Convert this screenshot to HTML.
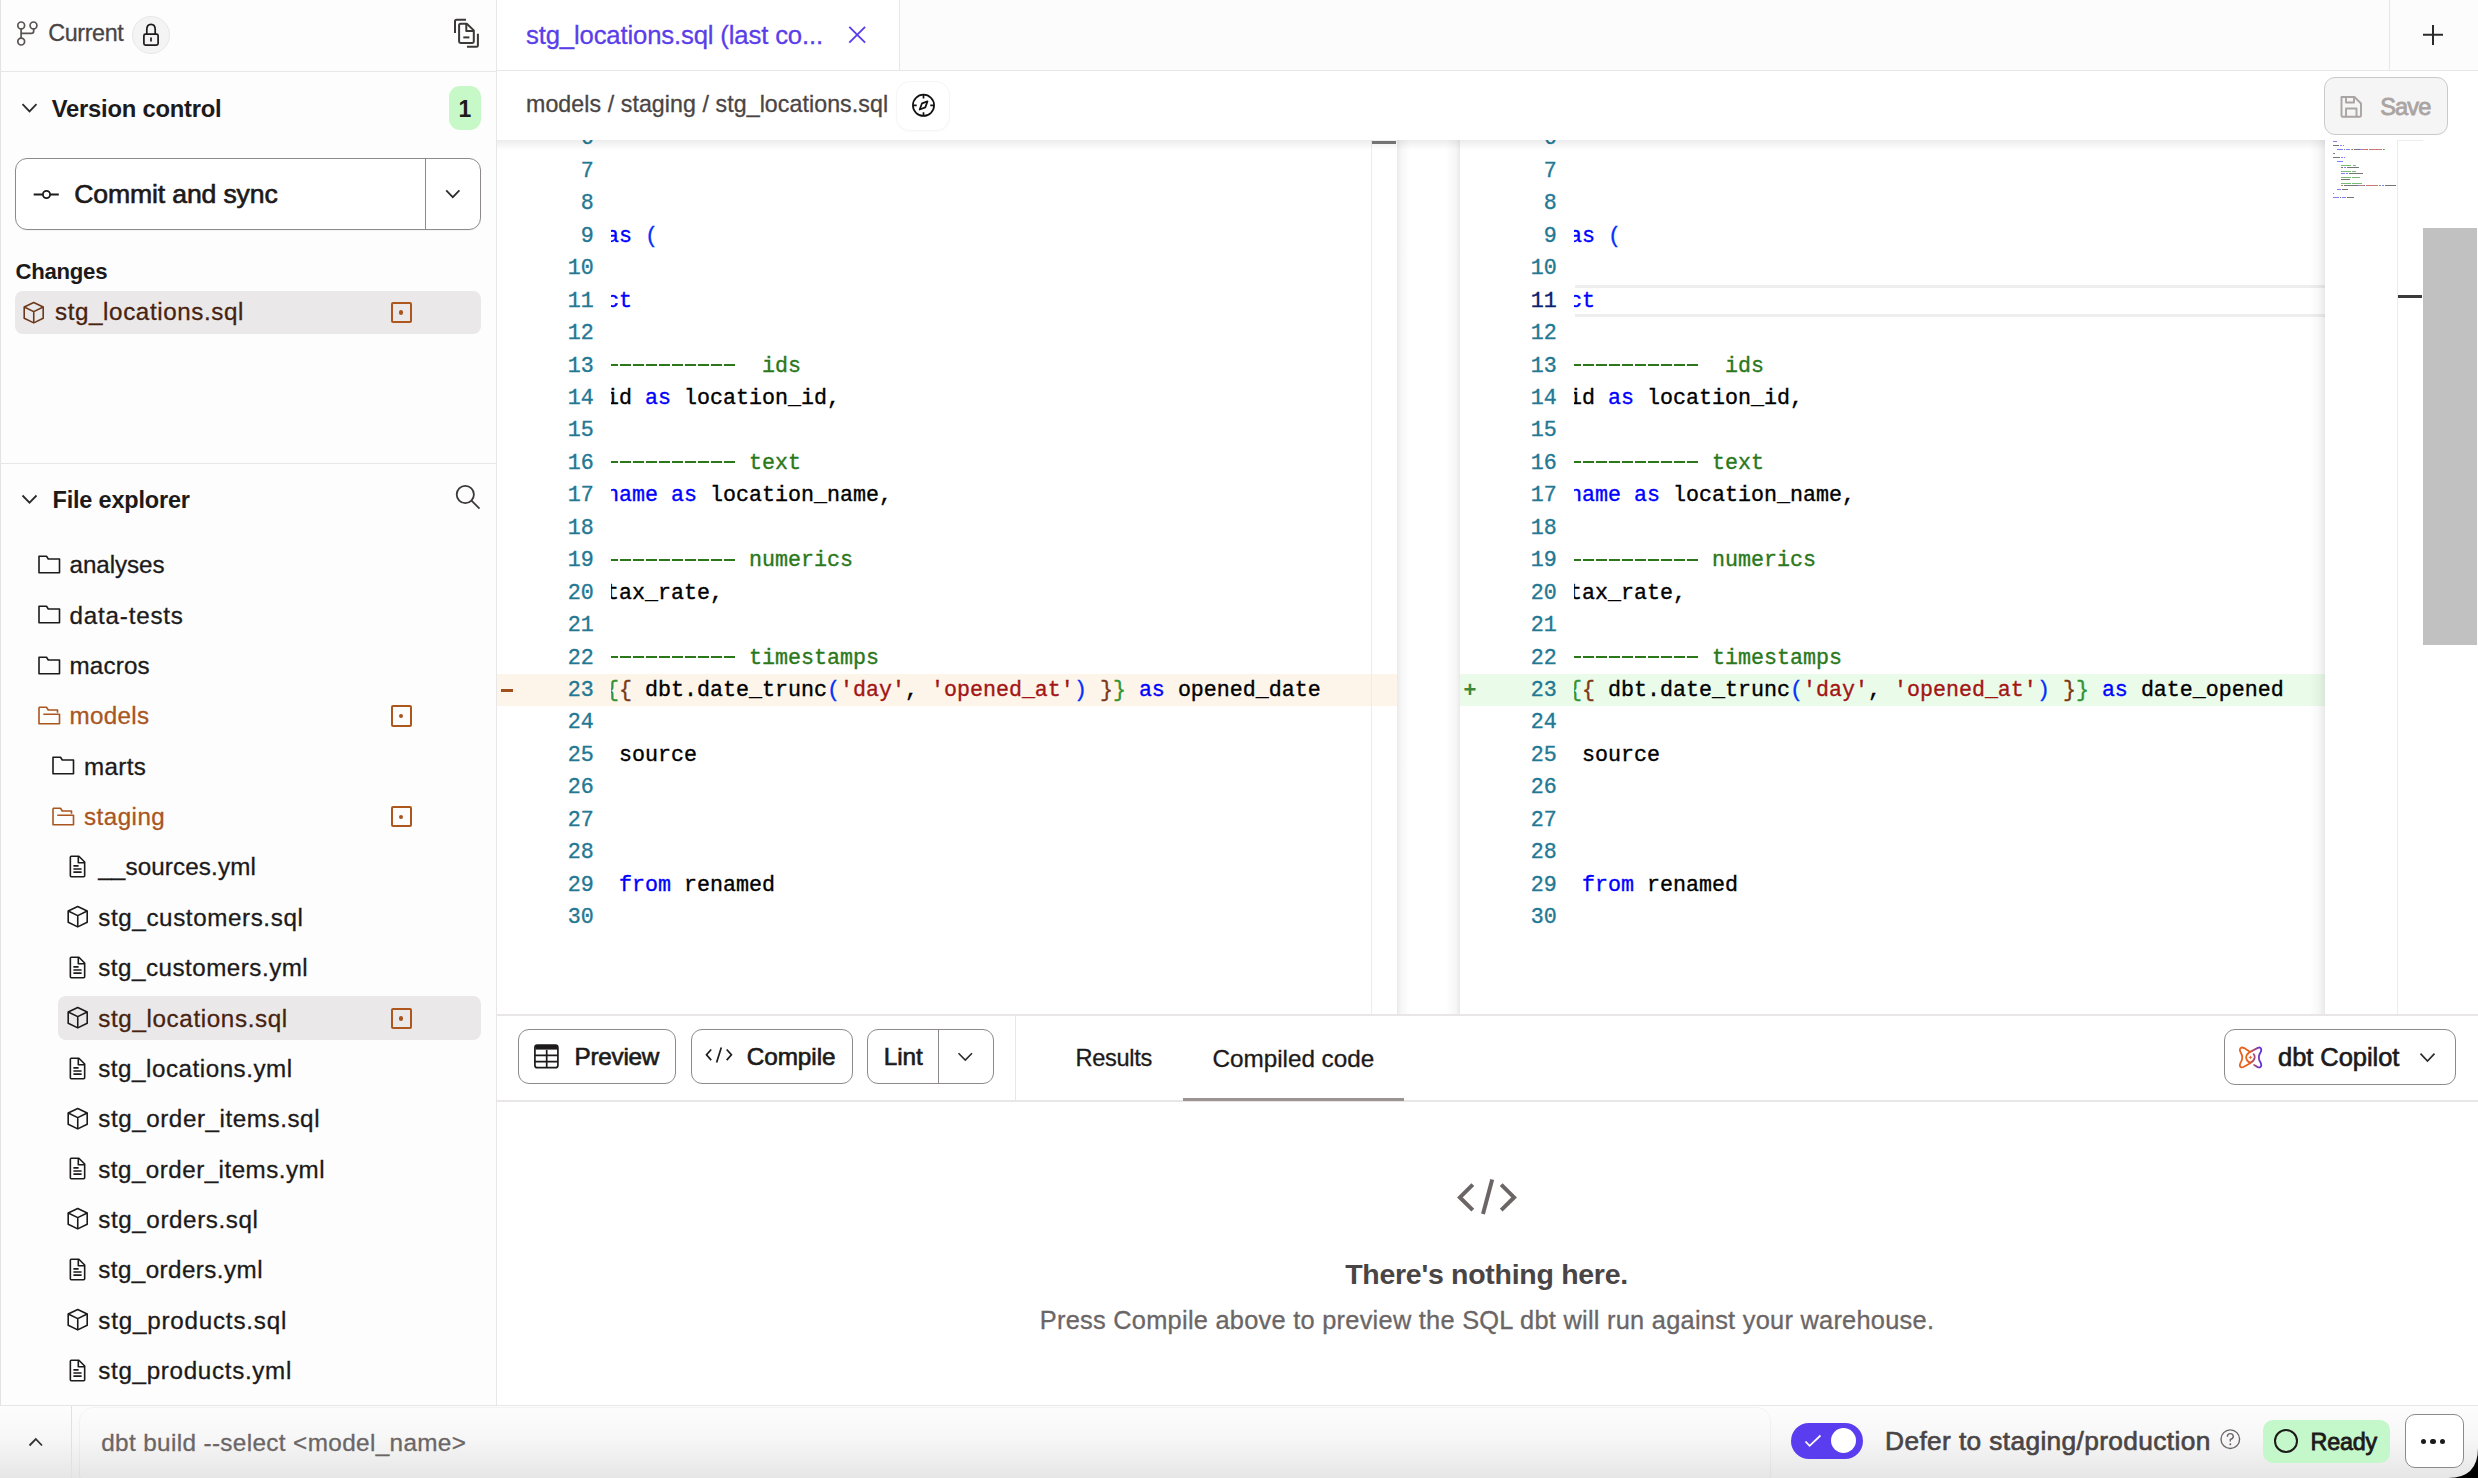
<!DOCTYPE html>
<html><head><meta charset="utf-8"><title>dbt IDE</title>
<style>
html,body{margin:0;padding:0;width:2478px;height:1478px;overflow:hidden;background:#fff;}
body{position:relative;font-family:'Liberation Sans', sans-serif;}
.a{position:absolute;box-sizing:content-box;}
.t{position:absolute;white-space:pre;}
svg.a{overflow:visible;}
</style></head><body>
<div class="a" style="left:0px;top:0px;width:497px;height:1405px;background:#fdfdfd;"></div>
<div class="a" style="left:496px;top:0px;width:1px;height:1405px;background:#e8e6e6;"></div>
<div class="a" style="left:0px;top:0px;width:1px;height:1478px;background:#e3e3e3;"></div>
<div class="a" style="left:0px;top:71px;width:496px;height:1px;background:#e8e6e6;"></div>
<svg class="a" style="left:10px;top:12px;" width="50" height="44" viewBox="0 0 50 44" fill="none"><g stroke="#5a5353" stroke-width="1.7"><circle cx="11.2" cy="13.4" r="3.4"/><circle cx="23.5" cy="13.4" r="3.4"/><circle cx="11.2" cy="29.6" r="3.4"/><path d="M11.1 16.8V26.2M11.1 21.4H21.3Q23.7 21.4 23.7 19V16.8"/></g></svg>
<div class="t" style="left:48.20px;top:18.48px;font-size:23.3px;line-height:30.29px;color:#4a4545;font-weight:400;font-family:'Liberation Sans', sans-serif;-webkit-text-stroke:0.3px #4a4545;letter-spacing:-0.354px;">Current</div>
<div class="a" style="left:132px;top:16px;width:36px;height:36px;border-radius:50%;background:#f4f4f4;border:1px solid #e9e7e7;"></div>
<svg class="a" style="left:128px;top:12px;" width="48" height="46" viewBox="0 0 48 46" fill="none"><g stroke="#1c1a1a" stroke-width="1.7"><rect x="15.9" y="22.1" width="14.2" height="11" rx="1.6"/><path d="M18.8 22V17.6Q18.8 12.3 23 12.3Q27.2 12.3 27.2 17.6V22"/><path d="M23 25.6V29.4"/></g></svg>
<svg class="a" style="left:440px;top:10px;" width="55" height="50" viewBox="0 0 55 50" fill="none"><g stroke="#3d3838" stroke-width="2" stroke-linejoin="round"><path d="M26 9.8H16.6Q15 9.8 15 11.6V23"/><path d="M19.1 15.2Q19.1 13.7 20.6 13.7H26.8L33.8 20.4V31.6Q33.8 33 32.3 33H20.6Q19.1 33 19.1 31.6Z"/><path d="M26.3 13.9V21H33.6"/><path d="M23.3 27.4H29.4"/><path d="M37.9 23.7V35.2Q37.9 36.7 36.4 36.7H27"/></g></svg>
<svg class="a" style="left:14px;top:96px;" width="30" height="26" viewBox="0 0 30 26" fill="none"><path d="M8.5 8.2L15.5 15.4L22.5 8.2" stroke="#2d2a2a" stroke-width="1.8"/></svg>
<div class="t" style="left:51.75px;top:93.53px;font-size:23.8px;line-height:30.94px;color:#1c1a1a;font-weight:700;font-family:'Liberation Sans', sans-serif;letter-spacing:-0.233px;">Version control</div>
<div class="a" style="left:449px;top:86px;width:32px;height:44px;background:#c6f8c8;border-radius:11px;"></div>
<div class="t" style="left:-535.00px;width:2000px;text-align:center;top:94.78px;font-size:23px;line-height:29.9px;color:#1c1a1a;font-weight:700;font-family:'Liberation Sans', sans-serif;">1</div>
<div class="a" style="left:15px;top:158px;width:464px;height:70px;border:1.3px solid #8f8a8a;border-radius:12px;background:#fff;box-shadow:0 1px 1px rgba(0,0,0,0.04);"></div>
<div class="a" style="left:425px;top:159px;width:1px;height:70px;background:#8f8a8a;"></div>
<svg class="a" style="left:30px;top:182px;" width="34" height="26" viewBox="0 0 34 26" fill="none"><g stroke="#1c1a1a" stroke-width="1.8"><circle cx="16.5" cy="12.5" r="3.6"/><path d="M3.7 12.5H12.9M20.1 12.5H28.8"/></g></svg>
<div class="t" style="left:74.25px;top:177.24px;font-size:26.6px;line-height:34.58px;color:#1c1a1a;font-weight:400;font-family:'Liberation Sans', sans-serif;-webkit-text-stroke:0.65px #1c1a1a;letter-spacing:-0.143px;">Commit and sync</div>
<svg class="a" style="left:440px;top:182px;" width="26" height="26" viewBox="0 0 26 26" fill="none"><path d="M6.2 8.4L12.8 15.2L19.4 8.4" stroke="#2d2a2a" stroke-width="1.7"/></svg>
<div class="t" style="left:15.50px;top:258.37px;font-size:22.2px;line-height:28.86px;color:#1c1a1a;font-weight:700;font-family:'Liberation Sans', sans-serif;letter-spacing:-0.281px;">Changes</div>
<div class="a" style="left:15px;top:291px;width:466px;height:43px;background:#ebe8e9;border-radius:8px;"></div>
<svg class="a" style="left:21.75px;top:299.75px;" width="24" height="25" viewBox="0 0 24 25" fill="none"><g stroke="#6b3a1c" stroke-width="1.6" stroke-linejoin="round"><path d="M11.75 2.5L21.2 7V18.3L11.75 22.9L2.2 18.3V7Z"/><path d="M2.2 7L11.75 11.6L21.2 7M11.75 11.6V22.9"/></g></svg>
<div class="t" style="left:55.00px;top:296.38px;font-size:24.2px;line-height:31.46px;color:#47230f;font-weight:400;font-family:'Liberation Sans', sans-serif;-webkit-text-stroke:0.3px #47230f;letter-spacing:0.601px;">stg_locations.sql</div>
<div class="a" style="left:390.5px;top:302px;width:17.3px;height:17.3px;border:2px solid #ad571d;border-radius:2px;"></div>
<div class="a" style="left:398.9px;top:310.4px;width:4.5px;height:4.5px;border-radius:50%;background:#a9541c;"></div>
<div class="a" style="left:0px;top:463px;width:496px;height:1px;background:#e8e6e6;"></div>
<svg class="a" style="left:14px;top:488px;" width="30" height="26" viewBox="0 0 30 26" fill="none"><path d="M8.5 7.5L15.5 14.7L22.5 7.5" stroke="#2d2a2a" stroke-width="1.8"/></svg>
<div class="t" style="left:52.50px;top:485.08px;font-size:23.5px;line-height:30.55px;color:#1c1a1a;font-weight:700;font-family:'Liberation Sans', sans-serif;letter-spacing:-0.194px;">File explorer</div>
<svg class="a" style="left:450px;top:480px;" width="36" height="34" viewBox="0 0 36 34" fill="none"><g stroke="#3d3838" stroke-width="1.8"><circle cx="15.3" cy="14.5" r="8.6"/><path d="M21.5 20.7L29.5 28.6"/></g></svg>
<svg class="a" style="left:37.1px;top:553.8px;" width="25" height="21" viewBox="0 0 25 21" fill="none"><path d="M2 2.2H9.5L11.3 5H22.5V18.7H2Z" stroke="#1c1a1a" stroke-width="1.6" stroke-linejoin="round"/></svg>
<div class="t" style="left:69.50px;top:549.18px;font-size:24.2px;line-height:31.46px;color:#1c1a1a;font-weight:400;font-family:'Liberation Sans', sans-serif;-webkit-text-stroke:0.3px #1c1a1a;letter-spacing:-0.056px;">analyses</div>
<svg class="a" style="left:37.1px;top:604.17px;" width="25" height="21" viewBox="0 0 25 21" fill="none"><path d="M2 2.2H9.5L11.3 5H22.5V18.7H2Z" stroke="#1c1a1a" stroke-width="1.6" stroke-linejoin="round"/></svg>
<div class="t" style="left:69.50px;top:599.55px;font-size:24.2px;line-height:31.46px;color:#1c1a1a;font-weight:400;font-family:'Liberation Sans', sans-serif;-webkit-text-stroke:0.3px #1c1a1a;letter-spacing:0.801px;">data-tests</div>
<svg class="a" style="left:37.1px;top:654.54px;" width="25" height="21" viewBox="0 0 25 21" fill="none"><path d="M2 2.2H9.5L11.3 5H22.5V18.7H2Z" stroke="#1c1a1a" stroke-width="1.6" stroke-linejoin="round"/></svg>
<div class="t" style="left:69.50px;top:649.92px;font-size:24.2px;line-height:31.46px;color:#1c1a1a;font-weight:400;font-family:'Liberation Sans', sans-serif;-webkit-text-stroke:0.3px #1c1a1a;letter-spacing:0.165px;">macros</div>
<svg class="a" style="left:37.1px;top:704.91px;" width="25" height="21" viewBox="0 0 25 21" fill="none"><g stroke="#a9561f" stroke-width="1.6" stroke-linejoin="round"><path d="M2 2.2H9.5L11.3 5H20.5V7.8"/><path d="M2 2.2V18.7H22.5V9.3H6.3"/></g></svg>
<div class="t" style="left:69.50px;top:700.29px;font-size:24.2px;line-height:31.46px;color:#a9561f;font-weight:400;font-family:'Liberation Sans', sans-serif;-webkit-text-stroke:0.3px #a9561f;letter-spacing:0.305px;">models</div>
<div class="a" style="left:390.5px;top:705.41px;width:17.3px;height:17.3px;border:2px solid #ad571d;border-radius:2px;"></div>
<div class="a" style="left:398.9px;top:713.81px;width:4.5px;height:4.5px;border-radius:50%;background:#a9541c;"></div>
<svg class="a" style="left:50.5px;top:755.28px;" width="25" height="21" viewBox="0 0 25 21" fill="none"><path d="M2 2.2H9.5L11.3 5H22.5V18.7H2Z" stroke="#1c1a1a" stroke-width="1.6" stroke-linejoin="round"/></svg>
<div class="t" style="left:84.00px;top:750.66px;font-size:24.2px;line-height:31.46px;color:#1c1a1a;font-weight:400;font-family:'Liberation Sans', sans-serif;-webkit-text-stroke:0.3px #1c1a1a;letter-spacing:0.362px;">marts</div>
<svg class="a" style="left:50.5px;top:805.65px;" width="25" height="21" viewBox="0 0 25 21" fill="none"><g stroke="#a9561f" stroke-width="1.6" stroke-linejoin="round"><path d="M2 2.2H9.5L11.3 5H20.5V7.8"/><path d="M2 2.2V18.7H22.5V9.3H6.3"/></g></svg>
<div class="t" style="left:84.00px;top:801.03px;font-size:24.2px;line-height:31.46px;color:#a9561f;font-weight:400;font-family:'Liberation Sans', sans-serif;-webkit-text-stroke:0.3px #a9561f;letter-spacing:0.463px;">staging</div>
<div class="a" style="left:390.5px;top:806.15px;width:17.3px;height:17.3px;border:2px solid #ad571d;border-radius:2px;"></div>
<div class="a" style="left:398.9px;top:814.55px;width:4.5px;height:4.5px;border-radius:50%;background:#a9541c;"></div>
<svg class="a" style="left:68.35px;top:854.02px;" width="19" height="25" viewBox="0 0 19 25" fill="none"><g stroke="#1c1a1a" stroke-width="1.6" stroke-linejoin="round"><path d="M2.35 3.3Q2.35 2.3 3.35 2.3H10.9L16.66 8V21.7Q16.66 22.7 15.66 22.7H3.35Q2.35 22.7 2.35 21.7Z"/><path d="M10.3 2.5V8.7H16.5"/><path d="M5.4 11.9H10.6M5.4 15H13.6M5.4 18.1H13.6"/></g></svg>
<div class="t" style="left:98.25px;top:851.40px;font-size:24.2px;line-height:31.46px;color:#1c1a1a;font-weight:400;font-family:'Liberation Sans', sans-serif;-webkit-text-stroke:0.3px #1c1a1a;letter-spacing:0.136px;">__sources.yml</div>
<svg class="a" style="left:65.9px;top:904.1899999999999px;" width="24" height="25" viewBox="0 0 24 25" fill="none"><g stroke="#1c1a1a" stroke-width="1.6" stroke-linejoin="round"><path d="M11.75 2.5L21.2 7V18.3L11.75 22.9L2.2 18.3V7Z"/><path d="M2.2 7L11.75 11.6L21.2 7M11.75 11.6V22.9"/></g></svg>
<div class="t" style="left:98.25px;top:901.77px;font-size:24.2px;line-height:31.46px;color:#1c1a1a;font-weight:400;font-family:'Liberation Sans', sans-serif;-webkit-text-stroke:0.3px #1c1a1a;letter-spacing:0.603px;">stg_customers.sql</div>
<svg class="a" style="left:68.35px;top:954.76px;" width="19" height="25" viewBox="0 0 19 25" fill="none"><g stroke="#1c1a1a" stroke-width="1.6" stroke-linejoin="round"><path d="M2.35 3.3Q2.35 2.3 3.35 2.3H10.9L16.66 8V21.7Q16.66 22.7 15.66 22.7H3.35Q2.35 22.7 2.35 21.7Z"/><path d="M10.3 2.5V8.7H16.5"/><path d="M5.4 11.9H10.6M5.4 15H13.6M5.4 18.1H13.6"/></g></svg>
<div class="t" style="left:98.25px;top:952.14px;font-size:24.2px;line-height:31.46px;color:#1c1a1a;font-weight:400;font-family:'Liberation Sans', sans-serif;-webkit-text-stroke:0.3px #1c1a1a;letter-spacing:0.492px;">stg_customers.yml</div>
<div class="a" style="left:58px;top:995.83px;width:423px;height:43.80000000000007px;background:#ebe8e9;border-radius:8px;"></div>
<svg class="a" style="left:65.9px;top:1004.93px;" width="24" height="25" viewBox="0 0 24 25" fill="none"><g stroke="#1c1a1a" stroke-width="1.6" stroke-linejoin="round"><path d="M11.75 2.5L21.2 7V18.3L11.75 22.9L2.2 18.3V7Z"/><path d="M2.2 7L11.75 11.6L21.2 7M11.75 11.6V22.9"/></g></svg>
<div class="t" style="left:98.25px;top:1002.51px;font-size:24.2px;line-height:31.46px;color:#47230f;font-weight:400;font-family:'Liberation Sans', sans-serif;-webkit-text-stroke:0.3px #47230f;letter-spacing:0.632px;">stg_locations.sql</div>
<div class="a" style="left:390.5px;top:1007.6299999999999px;width:17.3px;height:17.3px;border:2px solid #ad571d;border-radius:2px;"></div>
<div class="a" style="left:398.9px;top:1016.0299999999999px;width:4.5px;height:4.5px;border-radius:50%;background:#a9541c;"></div>
<svg class="a" style="left:68.35px;top:1055.5px;" width="19" height="25" viewBox="0 0 19 25" fill="none"><g stroke="#1c1a1a" stroke-width="1.6" stroke-linejoin="round"><path d="M2.35 3.3Q2.35 2.3 3.35 2.3H10.9L16.66 8V21.7Q16.66 22.7 15.66 22.7H3.35Q2.35 22.7 2.35 21.7Z"/><path d="M10.3 2.5V8.7H16.5"/><path d="M5.4 11.9H10.6M5.4 15H13.6M5.4 18.1H13.6"/></g></svg>
<div class="t" style="left:98.25px;top:1052.88px;font-size:24.2px;line-height:31.46px;color:#1c1a1a;font-weight:400;font-family:'Liberation Sans', sans-serif;-webkit-text-stroke:0.3px #1c1a1a;letter-spacing:0.524px;">stg_locations.yml</div>
<svg class="a" style="left:65.9px;top:1105.6699999999998px;" width="24" height="25" viewBox="0 0 24 25" fill="none"><g stroke="#1c1a1a" stroke-width="1.6" stroke-linejoin="round"><path d="M11.75 2.5L21.2 7V18.3L11.75 22.9L2.2 18.3V7Z"/><path d="M2.2 7L11.75 11.6L21.2 7M11.75 11.6V22.9"/></g></svg>
<div class="t" style="left:98.25px;top:1103.25px;font-size:24.2px;line-height:31.46px;color:#1c1a1a;font-weight:400;font-family:'Liberation Sans', sans-serif;-webkit-text-stroke:0.3px #1c1a1a;letter-spacing:0.566px;">stg_order_items.sql</div>
<svg class="a" style="left:68.35px;top:1156.24px;" width="19" height="25" viewBox="0 0 19 25" fill="none"><g stroke="#1c1a1a" stroke-width="1.6" stroke-linejoin="round"><path d="M2.35 3.3Q2.35 2.3 3.35 2.3H10.9L16.66 8V21.7Q16.66 22.7 15.66 22.7H3.35Q2.35 22.7 2.35 21.7Z"/><path d="M10.3 2.5V8.7H16.5"/><path d="M5.4 11.9H10.6M5.4 15H13.6M5.4 18.1H13.6"/></g></svg>
<div class="t" style="left:98.25px;top:1153.62px;font-size:24.2px;line-height:31.46px;color:#1c1a1a;font-weight:400;font-family:'Liberation Sans', sans-serif;-webkit-text-stroke:0.3px #1c1a1a;letter-spacing:0.472px;">stg_order_items.yml</div>
<svg class="a" style="left:65.9px;top:1206.4099999999999px;" width="24" height="25" viewBox="0 0 24 25" fill="none"><g stroke="#1c1a1a" stroke-width="1.6" stroke-linejoin="round"><path d="M11.75 2.5L21.2 7V18.3L11.75 22.9L2.2 18.3V7Z"/><path d="M2.2 7L11.75 11.6L21.2 7M11.75 11.6V22.9"/></g></svg>
<div class="t" style="left:98.25px;top:1203.99px;font-size:24.2px;line-height:31.46px;color:#1c1a1a;font-weight:400;font-family:'Liberation Sans', sans-serif;-webkit-text-stroke:0.3px #1c1a1a;letter-spacing:0.594px;">stg_orders.sql</div>
<svg class="a" style="left:68.35px;top:1256.9799999999998px;" width="19" height="25" viewBox="0 0 19 25" fill="none"><g stroke="#1c1a1a" stroke-width="1.6" stroke-linejoin="round"><path d="M2.35 3.3Q2.35 2.3 3.35 2.3H10.9L16.66 8V21.7Q16.66 22.7 15.66 22.7H3.35Q2.35 22.7 2.35 21.7Z"/><path d="M10.3 2.5V8.7H16.5"/><path d="M5.4 11.9H10.6M5.4 15H13.6M5.4 18.1H13.6"/></g></svg>
<div class="t" style="left:98.25px;top:1254.36px;font-size:24.2px;line-height:31.46px;color:#1c1a1a;font-weight:400;font-family:'Liberation Sans', sans-serif;-webkit-text-stroke:0.3px #1c1a1a;letter-spacing:0.434px;">stg_orders.yml</div>
<svg class="a" style="left:65.9px;top:1307.1499999999999px;" width="24" height="25" viewBox="0 0 24 25" fill="none"><g stroke="#1c1a1a" stroke-width="1.6" stroke-linejoin="round"><path d="M11.75 2.5L21.2 7V18.3L11.75 22.9L2.2 18.3V7Z"/><path d="M2.2 7L11.75 11.6L21.2 7M11.75 11.6V22.9"/></g></svg>
<div class="t" style="left:98.25px;top:1304.73px;font-size:24.2px;line-height:31.46px;color:#1c1a1a;font-weight:400;font-family:'Liberation Sans', sans-serif;-webkit-text-stroke:0.3px #1c1a1a;letter-spacing:0.795px;">stg_products.sql</div>
<svg class="a" style="left:68.35px;top:1357.72px;" width="19" height="25" viewBox="0 0 19 25" fill="none"><g stroke="#1c1a1a" stroke-width="1.6" stroke-linejoin="round"><path d="M2.35 3.3Q2.35 2.3 3.35 2.3H10.9L16.66 8V21.7Q16.66 22.7 15.66 22.7H3.35Q2.35 22.7 2.35 21.7Z"/><path d="M10.3 2.5V8.7H16.5"/><path d="M5.4 11.9H10.6M5.4 15H13.6M5.4 18.1H13.6"/></g></svg>
<div class="t" style="left:98.25px;top:1355.10px;font-size:24.2px;line-height:31.46px;color:#1c1a1a;font-weight:400;font-family:'Liberation Sans', sans-serif;-webkit-text-stroke:0.3px #1c1a1a;letter-spacing:0.683px;">stg_products.yml</div>
<div class="a" style="left:497px;top:0px;width:1981px;height:71px;background:#fcfcfc;"></div>
<div class="a" style="left:497px;top:0px;width:402px;height:71px;background:#fff;"></div>
<div class="a" style="left:899px;top:0px;width:1px;height:71px;background:#e8e6e6;"></div>
<div class="a" style="left:2389px;top:0px;width:1px;height:71px;background:#e8e6e6;"></div>
<div class="t" style="left:526.00px;top:19.48px;font-size:25.7px;line-height:33.41px;color:#5a3ee9;font-weight:400;font-family:'Liberation Sans', sans-serif;-webkit-text-stroke:0.3px #5a3ee9;letter-spacing:-0.149px;">stg_locations.sql (last co...</div>
<svg class="a" style="left:845px;top:23px;" width="24" height="24" viewBox="0 0 24 24" fill="none"><path d="M4.3 3.9L20.1 19.7M20.1 3.9L4.3 19.7" stroke="#5a3ee9" stroke-width="1.9"/></svg>
<svg class="a" style="left:2418px;top:20px;" width="30" height="30" viewBox="0 0 30 30" fill="none"><path d="M15 5V25M5 14.8H25" stroke="#2d2a2a" stroke-width="2"/></svg>
<div class="a" style="left:497px;top:71px;width:1981px;height:69px;background:#fff;"></div>
<div class="a" style="left:497px;top:70px;width:1981px;height:1px;background:#e8e6e6;"></div>
<div class="a" style="left:899px;top:0px;width:1px;height:71px;background:#e8e6e6;"></div>
<div class="t" style="left:526.00px;top:88.78px;font-size:23.2px;line-height:30.16px;color:#4a4545;font-weight:400;font-family:'Liberation Sans', sans-serif;-webkit-text-stroke:0.3px #4a4545;letter-spacing:0.071px;">models / staging / stg_locations.sql</div>
<div class="a" style="left:896px;top:81px;width:52px;height:48px;border-radius:14px;border:1px solid #f6f6f6;box-shadow:0 1px 2px rgba(0,0,0,0.025);background:#fff;"></div>
<svg class="a" style="left:908px;top:90px;" width="32" height="32" viewBox="0 0 32 32" fill="none"><g stroke="#111" stroke-width="1.7"><circle cx="15.5" cy="15.3" r="10.6"/><path d="M15.5 4.7V8.6M15.5 22.3V26.2M4.9 15.3H8.7M22.3 15.3H26.1"/><path d="M11.7 19.5L14 13.4L19.5 11.4L17.3 17.4Z" stroke-linejoin="round"/></g></svg>
<div class="a" style="left:2324px;top:77px;width:122px;height:56px;border-radius:11px;border:1.2px solid #cdc9c9;background:#f5f5f5;"></div>
<svg class="a" style="left:2336px;top:92px;" width="30" height="30" viewBox="0 0 30 30" fill="none"><g stroke="#aaa4a2" stroke-width="1.9" stroke-linejoin="round"><path d="M5.5 5H18.5L25 11.5V23.5Q25 24.8 23.7 24.8H6.8Q5.5 24.8 5.5 23.5Z"/><path d="M10 5.2V10.5H18V5.2M10 24.6V16.5H20.5V24.6"/></g></svg>
<div class="t" style="left:2380.20px;top:92.08px;font-size:23.6px;line-height:30.68px;color:#aaa4a2;font-weight:400;font-family:'Liberation Sans', sans-serif;-webkit-text-stroke:0.8px #aaa4a2;letter-spacing:-0.869px;">Save</div>
<div class="a" style="left:497px;top:140px;width:1981px;height:875px;background:#fff;"></div>
<div class="a" style="left:497px;top:674px;width:900px;height:32px;background:#fdf4ea;"></div>
<div class="a" style="left:501px;top:689px;width:12px;height:3px;background:#a0501a;"></div>
<div class="a" style="left:493.79999999999995px;top:140px;width:100px;height:875px;overflow:hidden;font-family:'Liberation Mono', monospace;font-size:21.67px;"><div class="t" style="left:-100.0px;width:200px;text-align:right;top:-17.65px;height:32.45px;line-height:32.45px;color:#237893;padding-top:1px;-webkit-text-stroke:0.35px #237893;">6</div><div class="t" style="left:-100.0px;width:200px;text-align:right;top:14.80px;height:32.45px;line-height:32.45px;color:#237893;padding-top:1px;-webkit-text-stroke:0.35px #237893;">7</div><div class="t" style="left:-100.0px;width:200px;text-align:right;top:47.25px;height:32.45px;line-height:32.45px;color:#237893;padding-top:1px;-webkit-text-stroke:0.35px #237893;">8</div><div class="t" style="left:-100.0px;width:200px;text-align:right;top:79.70px;height:32.45px;line-height:32.45px;color:#237893;padding-top:1px;-webkit-text-stroke:0.35px #237893;">9</div><div class="t" style="left:-100.0px;width:200px;text-align:right;top:112.15px;height:32.45px;line-height:32.45px;color:#237893;padding-top:1px;-webkit-text-stroke:0.35px #237893;">10</div><div class="t" style="left:-100.0px;width:200px;text-align:right;top:144.60px;height:32.45px;line-height:32.45px;color:#237893;padding-top:1px;-webkit-text-stroke:0.35px #237893;">11</div><div class="t" style="left:-100.0px;width:200px;text-align:right;top:177.05px;height:32.45px;line-height:32.45px;color:#237893;padding-top:1px;-webkit-text-stroke:0.35px #237893;">12</div><div class="t" style="left:-100.0px;width:200px;text-align:right;top:209.50px;height:32.45px;line-height:32.45px;color:#237893;padding-top:1px;-webkit-text-stroke:0.35px #237893;">13</div><div class="t" style="left:-100.0px;width:200px;text-align:right;top:241.95px;height:32.45px;line-height:32.45px;color:#237893;padding-top:1px;-webkit-text-stroke:0.35px #237893;">14</div><div class="t" style="left:-100.0px;width:200px;text-align:right;top:274.40px;height:32.45px;line-height:32.45px;color:#237893;padding-top:1px;-webkit-text-stroke:0.35px #237893;">15</div><div class="t" style="left:-100.0px;width:200px;text-align:right;top:306.85px;height:32.45px;line-height:32.45px;color:#237893;padding-top:1px;-webkit-text-stroke:0.35px #237893;">16</div><div class="t" style="left:-100.0px;width:200px;text-align:right;top:339.30px;height:32.45px;line-height:32.45px;color:#237893;padding-top:1px;-webkit-text-stroke:0.35px #237893;">17</div><div class="t" style="left:-100.0px;width:200px;text-align:right;top:371.75px;height:32.45px;line-height:32.45px;color:#237893;padding-top:1px;-webkit-text-stroke:0.35px #237893;">18</div><div class="t" style="left:-100.0px;width:200px;text-align:right;top:404.20px;height:32.45px;line-height:32.45px;color:#237893;padding-top:1px;-webkit-text-stroke:0.35px #237893;">19</div><div class="t" style="left:-100.0px;width:200px;text-align:right;top:436.65px;height:32.45px;line-height:32.45px;color:#237893;padding-top:1px;-webkit-text-stroke:0.35px #237893;">20</div><div class="t" style="left:-100.0px;width:200px;text-align:right;top:469.10px;height:32.45px;line-height:32.45px;color:#237893;padding-top:1px;-webkit-text-stroke:0.35px #237893;">21</div><div class="t" style="left:-100.0px;width:200px;text-align:right;top:501.55px;height:32.45px;line-height:32.45px;color:#237893;padding-top:1px;-webkit-text-stroke:0.35px #237893;">22</div><div class="t" style="left:-100.0px;width:200px;text-align:right;top:534.00px;height:32.45px;line-height:32.45px;color:#237893;padding-top:1px;-webkit-text-stroke:0.35px #237893;">23</div><div class="t" style="left:-100.0px;width:200px;text-align:right;top:566.45px;height:32.45px;line-height:32.45px;color:#237893;padding-top:1px;-webkit-text-stroke:0.35px #237893;">24</div><div class="t" style="left:-100.0px;width:200px;text-align:right;top:598.90px;height:32.45px;line-height:32.45px;color:#237893;padding-top:1px;-webkit-text-stroke:0.35px #237893;">25</div><div class="t" style="left:-100.0px;width:200px;text-align:right;top:631.35px;height:32.45px;line-height:32.45px;color:#237893;padding-top:1px;-webkit-text-stroke:0.35px #237893;">26</div><div class="t" style="left:-100.0px;width:200px;text-align:right;top:663.80px;height:32.45px;line-height:32.45px;color:#237893;padding-top:1px;-webkit-text-stroke:0.35px #237893;">27</div><div class="t" style="left:-100.0px;width:200px;text-align:right;top:696.25px;height:32.45px;line-height:32.45px;color:#237893;padding-top:1px;-webkit-text-stroke:0.35px #237893;">28</div><div class="t" style="left:-100.0px;width:200px;text-align:right;top:728.70px;height:32.45px;line-height:32.45px;color:#237893;padding-top:1px;-webkit-text-stroke:0.35px #237893;">29</div><div class="t" style="left:-100.0px;width:200px;text-align:right;top:761.15px;height:32.45px;line-height:32.45px;color:#237893;padding-top:1px;-webkit-text-stroke:0.35px #237893;">30</div></div>
<div class="a" style="left:611px;top:140px;width:760px;height:875px;overflow:hidden;font-family:'Liberation Mono', monospace;font-size:21.67px;letter-spacing:0px;-webkit-text-stroke:0.35px currentColor;"><div class="t" style="left:-109px;top:14.80px;line-height:32.45px;height:32.45px;padding-top:1px;"><span style="color:#0431fa">)</span><span style="color:#000000">,</span></div><div class="t" style="left:-109px;top:79.70px;line-height:32.45px;height:32.45px;padding-top:1px;"><span style="color:#000000">renamed </span><span style="color:#0000ff">as</span><span style="color:#000000"> </span><span style="color:#0431fa">(</span></div><div class="t" style="left:-109px;top:144.60px;line-height:32.45px;height:32.45px;padding-top:1px;"><span style="color:#000000">    </span><span style="color:#0000ff">select</span></div><div class="t" style="left:-109px;top:209.50px;line-height:32.45px;height:32.45px;padding-top:1px;"><span style="color:#2a781a">        </span><span style="display:inline-block;width:130.040px;height:2px;vertical-align:5.6px;background:repeating-linear-gradient(90deg,transparent 0 1px,#2a781a 1px 12.2px,transparent 12.2px 13.004px);"></span><span style="color:#2a781a">  ids</span></div><div class="t" style="left:-109px;top:241.95px;line-height:32.45px;height:32.45px;padding-top:1px;"><span style="color:#000000">        id </span><span style="color:#0000ff">as</span><span style="color:#000000"> location_id,</span></div><div class="t" style="left:-109px;top:306.85px;line-height:32.45px;height:32.45px;padding-top:1px;"><span style="color:#2a781a">        </span><span style="display:inline-block;width:130.040px;height:2px;vertical-align:5.6px;background:repeating-linear-gradient(90deg,transparent 0 1px,#2a781a 1px 12.2px,transparent 12.2px 13.004px);"></span><span style="color:#2a781a"> text</span></div><div class="t" style="left:-109px;top:339.30px;line-height:32.45px;height:32.45px;padding-top:1px;"><span style="color:#000000">        </span><span style="color:#0000ff">name</span><span style="color:#000000"> </span><span style="color:#0000ff">as</span><span style="color:#000000"> location_name,</span></div><div class="t" style="left:-109px;top:404.20px;line-height:32.45px;height:32.45px;padding-top:1px;"><span style="color:#2a781a">        </span><span style="display:inline-block;width:130.040px;height:2px;vertical-align:5.6px;background:repeating-linear-gradient(90deg,transparent 0 1px,#2a781a 1px 12.2px,transparent 12.2px 13.004px);"></span><span style="color:#2a781a"> numerics</span></div><div class="t" style="left:-109px;top:436.65px;line-height:32.45px;height:32.45px;padding-top:1px;"><span style="color:#000000">        tax_rate,</span></div><div class="t" style="left:-109px;top:501.55px;line-height:32.45px;height:32.45px;padding-top:1px;"><span style="color:#2a781a">        </span><span style="display:inline-block;width:130.040px;height:2px;vertical-align:5.6px;background:repeating-linear-gradient(90deg,transparent 0 1px,#2a781a 1px 12.2px,transparent 12.2px 13.004px);"></span><span style="color:#2a781a"> timestamps</span></div><div class="t" style="left:-109px;top:534.00px;line-height:32.45px;height:32.45px;padding-top:1px;"><span style="color:#000000">        </span><span style="color:#319331">{</span><span style="color:#7b3814">{</span><span style="color:#000000"> dbt.date_trunc</span><span style="color:#0431fa">(</span><span style="color:#a31515">&#x27;day&#x27;</span><span style="color:#000000">, </span><span style="color:#a31515">&#x27;opened_at&#x27;</span><span style="color:#0431fa">)</span><span style="color:#000000"> </span><span style="color:#7b3814">}</span><span style="color:#319331">}</span><span style="color:#000000"> </span><span style="color:#0000ff">as</span><span style="color:#000000"> </span><span style="color:#000000">opened_date</span></div><div class="t" style="left:-109px;top:598.90px;line-height:32.45px;height:32.45px;padding-top:1px;"><span style="color:#000000">    </span><span style="color:#0000ff">from</span><span style="color:#000000"> source</span></div><div class="t" style="left:-109px;top:663.80px;line-height:32.45px;height:32.45px;padding-top:1px;"><span style="color:#0431fa">)</span></div><div class="t" style="left:-109px;top:728.70px;line-height:32.45px;height:32.45px;padding-top:1px;"><span style="color:#0000ff">select</span><span style="color:#000000"> * </span><span style="color:#0000ff">from</span><span style="color:#000000"> renamed</span></div></div>
<div class="a" style="left:1460px;top:674px;width:865px;height:32px;background:#ebfbea;"></div>
<div class="t" style="left:470.00px;width:2000px;text-align:center;top:676.07px;font-size:22px;line-height:28.6px;color:#3b8a3b;font-weight:700;font-family:'Liberation Sans', sans-serif;">+</div>
<div class="a" style="left:1575px;top:285px;width:750px;height:3px;background:#eeeeee;"></div>
<div class="a" style="left:1575px;top:314px;width:750px;height:3px;background:#eeeeee;"></div>
<div class="a" style="left:1456.8px;top:140px;width:100px;height:875px;overflow:hidden;font-family:'Liberation Mono', monospace;font-size:21.67px;"><div class="t" style="left:-100.0px;width:200px;text-align:right;top:-17.65px;height:32.45px;line-height:32.45px;color:#237893;padding-top:1px;-webkit-text-stroke:0.35px #237893;">6</div><div class="t" style="left:-100.0px;width:200px;text-align:right;top:14.80px;height:32.45px;line-height:32.45px;color:#237893;padding-top:1px;-webkit-text-stroke:0.35px #237893;">7</div><div class="t" style="left:-100.0px;width:200px;text-align:right;top:47.25px;height:32.45px;line-height:32.45px;color:#237893;padding-top:1px;-webkit-text-stroke:0.35px #237893;">8</div><div class="t" style="left:-100.0px;width:200px;text-align:right;top:79.70px;height:32.45px;line-height:32.45px;color:#237893;padding-top:1px;-webkit-text-stroke:0.35px #237893;">9</div><div class="t" style="left:-100.0px;width:200px;text-align:right;top:112.15px;height:32.45px;line-height:32.45px;color:#237893;padding-top:1px;-webkit-text-stroke:0.35px #237893;">10</div><div class="t" style="left:-100.0px;width:200px;text-align:right;top:144.60px;height:32.45px;line-height:32.45px;color:#0b216f;padding-top:1px;-webkit-text-stroke:0.35px #0b216f;">11</div><div class="t" style="left:-100.0px;width:200px;text-align:right;top:177.05px;height:32.45px;line-height:32.45px;color:#237893;padding-top:1px;-webkit-text-stroke:0.35px #237893;">12</div><div class="t" style="left:-100.0px;width:200px;text-align:right;top:209.50px;height:32.45px;line-height:32.45px;color:#237893;padding-top:1px;-webkit-text-stroke:0.35px #237893;">13</div><div class="t" style="left:-100.0px;width:200px;text-align:right;top:241.95px;height:32.45px;line-height:32.45px;color:#237893;padding-top:1px;-webkit-text-stroke:0.35px #237893;">14</div><div class="t" style="left:-100.0px;width:200px;text-align:right;top:274.40px;height:32.45px;line-height:32.45px;color:#237893;padding-top:1px;-webkit-text-stroke:0.35px #237893;">15</div><div class="t" style="left:-100.0px;width:200px;text-align:right;top:306.85px;height:32.45px;line-height:32.45px;color:#237893;padding-top:1px;-webkit-text-stroke:0.35px #237893;">16</div><div class="t" style="left:-100.0px;width:200px;text-align:right;top:339.30px;height:32.45px;line-height:32.45px;color:#237893;padding-top:1px;-webkit-text-stroke:0.35px #237893;">17</div><div class="t" style="left:-100.0px;width:200px;text-align:right;top:371.75px;height:32.45px;line-height:32.45px;color:#237893;padding-top:1px;-webkit-text-stroke:0.35px #237893;">18</div><div class="t" style="left:-100.0px;width:200px;text-align:right;top:404.20px;height:32.45px;line-height:32.45px;color:#237893;padding-top:1px;-webkit-text-stroke:0.35px #237893;">19</div><div class="t" style="left:-100.0px;width:200px;text-align:right;top:436.65px;height:32.45px;line-height:32.45px;color:#237893;padding-top:1px;-webkit-text-stroke:0.35px #237893;">20</div><div class="t" style="left:-100.0px;width:200px;text-align:right;top:469.10px;height:32.45px;line-height:32.45px;color:#237893;padding-top:1px;-webkit-text-stroke:0.35px #237893;">21</div><div class="t" style="left:-100.0px;width:200px;text-align:right;top:501.55px;height:32.45px;line-height:32.45px;color:#237893;padding-top:1px;-webkit-text-stroke:0.35px #237893;">22</div><div class="t" style="left:-100.0px;width:200px;text-align:right;top:534.00px;height:32.45px;line-height:32.45px;color:#237893;padding-top:1px;-webkit-text-stroke:0.35px #237893;">23</div><div class="t" style="left:-100.0px;width:200px;text-align:right;top:566.45px;height:32.45px;line-height:32.45px;color:#237893;padding-top:1px;-webkit-text-stroke:0.35px #237893;">24</div><div class="t" style="left:-100.0px;width:200px;text-align:right;top:598.90px;height:32.45px;line-height:32.45px;color:#237893;padding-top:1px;-webkit-text-stroke:0.35px #237893;">25</div><div class="t" style="left:-100.0px;width:200px;text-align:right;top:631.35px;height:32.45px;line-height:32.45px;color:#237893;padding-top:1px;-webkit-text-stroke:0.35px #237893;">26</div><div class="t" style="left:-100.0px;width:200px;text-align:right;top:663.80px;height:32.45px;line-height:32.45px;color:#237893;padding-top:1px;-webkit-text-stroke:0.35px #237893;">27</div><div class="t" style="left:-100.0px;width:200px;text-align:right;top:696.25px;height:32.45px;line-height:32.45px;color:#237893;padding-top:1px;-webkit-text-stroke:0.35px #237893;">28</div><div class="t" style="left:-100.0px;width:200px;text-align:right;top:728.70px;height:32.45px;line-height:32.45px;color:#237893;padding-top:1px;-webkit-text-stroke:0.35px #237893;">29</div><div class="t" style="left:-100.0px;width:200px;text-align:right;top:761.15px;height:32.45px;line-height:32.45px;color:#237893;padding-top:1px;-webkit-text-stroke:0.35px #237893;">30</div></div>
<div class="a" style="left:1574px;top:140px;width:751px;height:875px;overflow:hidden;font-family:'Liberation Mono', monospace;font-size:21.67px;letter-spacing:0px;-webkit-text-stroke:0.35px currentColor;"><div class="t" style="left:-109px;top:14.80px;line-height:32.45px;height:32.45px;padding-top:1px;"><span style="color:#0431fa">)</span><span style="color:#000000">,</span></div><div class="t" style="left:-109px;top:79.70px;line-height:32.45px;height:32.45px;padding-top:1px;"><span style="color:#000000">renamed </span><span style="color:#0000ff">as</span><span style="color:#000000"> </span><span style="color:#0431fa">(</span></div><div class="t" style="left:-109px;top:144.60px;line-height:32.45px;height:32.45px;padding-top:1px;"><span style="color:#000000">    </span><span style="color:#0000ff">select</span></div><div class="t" style="left:-109px;top:209.50px;line-height:32.45px;height:32.45px;padding-top:1px;"><span style="color:#2a781a">        </span><span style="display:inline-block;width:130.040px;height:2px;vertical-align:5.6px;background:repeating-linear-gradient(90deg,transparent 0 1px,#2a781a 1px 12.2px,transparent 12.2px 13.004px);"></span><span style="color:#2a781a">  ids</span></div><div class="t" style="left:-109px;top:241.95px;line-height:32.45px;height:32.45px;padding-top:1px;"><span style="color:#000000">        id </span><span style="color:#0000ff">as</span><span style="color:#000000"> location_id,</span></div><div class="t" style="left:-109px;top:306.85px;line-height:32.45px;height:32.45px;padding-top:1px;"><span style="color:#2a781a">        </span><span style="display:inline-block;width:130.040px;height:2px;vertical-align:5.6px;background:repeating-linear-gradient(90deg,transparent 0 1px,#2a781a 1px 12.2px,transparent 12.2px 13.004px);"></span><span style="color:#2a781a"> text</span></div><div class="t" style="left:-109px;top:339.30px;line-height:32.45px;height:32.45px;padding-top:1px;"><span style="color:#000000">        </span><span style="color:#0000ff">name</span><span style="color:#000000"> </span><span style="color:#0000ff">as</span><span style="color:#000000"> location_name,</span></div><div class="t" style="left:-109px;top:404.20px;line-height:32.45px;height:32.45px;padding-top:1px;"><span style="color:#2a781a">        </span><span style="display:inline-block;width:130.040px;height:2px;vertical-align:5.6px;background:repeating-linear-gradient(90deg,transparent 0 1px,#2a781a 1px 12.2px,transparent 12.2px 13.004px);"></span><span style="color:#2a781a"> numerics</span></div><div class="t" style="left:-109px;top:436.65px;line-height:32.45px;height:32.45px;padding-top:1px;"><span style="color:#000000">        tax_rate,</span></div><div class="t" style="left:-109px;top:501.55px;line-height:32.45px;height:32.45px;padding-top:1px;"><span style="color:#2a781a">        </span><span style="display:inline-block;width:130.040px;height:2px;vertical-align:5.6px;background:repeating-linear-gradient(90deg,transparent 0 1px,#2a781a 1px 12.2px,transparent 12.2px 13.004px);"></span><span style="color:#2a781a"> timestamps</span></div><div class="t" style="left:-109px;top:534.00px;line-height:32.45px;height:32.45px;padding-top:1px;"><span style="color:#000000">        </span><span style="color:#319331">{</span><span style="color:#7b3814">{</span><span style="color:#000000"> dbt.date_trunc</span><span style="color:#0431fa">(</span><span style="color:#a31515">&#x27;day&#x27;</span><span style="color:#000000">, </span><span style="color:#a31515">&#x27;opened_at&#x27;</span><span style="color:#0431fa">)</span><span style="color:#000000"> </span><span style="color:#7b3814">}</span><span style="color:#319331">}</span><span style="color:#000000"> </span><span style="color:#0000ff">as</span><span style="color:#000000"> </span><span style="color:#000000">date_opened</span></div><div class="t" style="left:-109px;top:598.90px;line-height:32.45px;height:32.45px;padding-top:1px;"><span style="color:#000000">    </span><span style="color:#0000ff">from</span><span style="color:#000000"> source</span></div><div class="t" style="left:-109px;top:663.80px;line-height:32.45px;height:32.45px;padding-top:1px;"><span style="color:#0431fa">)</span></div><div class="t" style="left:-109px;top:728.70px;line-height:32.45px;height:32.45px;padding-top:1px;"><span style="color:#0000ff">select</span><span style="color:#000000"> * </span><span style="color:#0000ff">from</span><span style="color:#000000"> renamed</span></div></div>
<div class="a" style="left:1371px;top:140px;width:1px;height:875px;background:#ececec;"></div>
<div class="a" style="left:1372px;top:141px;width:24px;height:3px;background:#7a7a7a;"></div>
<div class="a" style="left:1397px;top:140px;width:63px;height:875px;background:linear-gradient(90deg,#e9e9e9 0px,#f6f6f6 4px,#fff 13px,#fff 49px,#f6f6f6 59px,#e9e9e9 63px);"></div>
<div class="a" style="left:2309px;top:140px;width:16px;height:875px;background:linear-gradient(90deg,rgba(0,0,0,0) 0,rgba(0,0,0,0.03) 60%,rgba(0,0,0,0.085) 100%);"></div>
<div class="a" style="left:2325px;top:140px;width:72px;height:875px;background:#fff;"></div>
<div class="a" style="left:2397px;top:140px;width:1px;height:875px;background:#ececec;"></div>
<div class="a" style="left:2398px;top:295px;width:24px;height:3px;background:#3a3a3a;"></div>
<div class="a" style="left:2423px;top:228px;width:54px;height:417px;background:#c1c1c1;"></div>
<div class="a" style="left:497px;top:140px;width:1828px;height:10px;background:linear-gradient(180deg,rgba(0,0,0,0.075),rgba(0,0,0,0));"></div>
<div class="a" style="left:2398px;top:140px;width:25px;height:1px;background:#eeeeee;"></div>
<div class="a" style="left:497px;top:1015px;width:1981px;height:390px;background:#fff;"></div>
<div class="a" style="left:497px;top:1014px;width:1981px;height:2px;background:#e8e6e6;"></div>
<div class="a" style="left:497px;top:1100px;width:1981px;height:2px;background:#e8e6e6;"></div>
<div class="a" style="left:1015px;top:1016px;width:1px;height:85px;background:#e8e6e6;"></div>
<div class="a" style="left:518px;top:1029px;width:156.4px;height:53.4px;border:1.3px solid #8f8a8a;border-radius:11px;background:#fff;"></div>
<svg class="a" style="left:530px;top:1040px;" width="34" height="34" viewBox="0 0 34 34" fill="none"><g stroke="#1c1a1a" stroke-width="1.7"><rect x="4.9" y="5.2" width="23" height="22.5" rx="2.5"/><path d="M5.5 7.6H27.3" stroke-width="4"/><path d="M4.9 15.3H27.8M4.9 21.6H27.8M16.7 10V27.7"/></g></svg>
<div class="t" style="left:574.60px;top:1041.08px;font-size:24.3px;line-height:31.59px;color:#1c1a1a;font-weight:400;font-family:'Liberation Sans', sans-serif;-webkit-text-stroke:0.65px #1c1a1a;letter-spacing:-0.293px;">Preview</div>
<div class="a" style="left:691px;top:1029px;width:160.4px;height:53.4px;border:1.3px solid #8f8a8a;border-radius:11px;background:#fff;"></div>
<svg class="a" style="left:702px;top:1042px;" width="34" height="26" viewBox="0 0 34 26" fill="none"><g stroke="#1c1a1a" stroke-width="1.7"><path d="M9.2 7.5L4.5 12.8L9.2 18.1M24.7 7.5L29.4 12.8L24.7 18.1M19.3 5.5L14.6 20.4"/></g></svg>
<div class="t" style="left:746.70px;top:1041.08px;font-size:24.3px;line-height:31.59px;color:#1c1a1a;font-weight:400;font-family:'Liberation Sans', sans-serif;-webkit-text-stroke:0.65px #1c1a1a;letter-spacing:-0.039px;">Compile</div>
<div class="a" style="left:867px;top:1029px;width:125.4px;height:53.4px;border:1.3px solid #8f8a8a;border-radius:11px;background:#fff;"></div>
<div class="a" style="left:938px;top:1030px;width:1px;height:54px;background:#8f8a8a;"></div>
<div class="t" style="left:883.80px;top:1041.08px;font-size:24.3px;line-height:31.59px;color:#1c1a1a;font-weight:400;font-family:'Liberation Sans', sans-serif;-webkit-text-stroke:0.65px #1c1a1a;letter-spacing:-0.058px;">Lint</div>
<svg class="a" style="left:952px;top:1046px;" width="26" height="22" viewBox="0 0 26 22" fill="none"><path d="M6.5 7.2L13.3 14L20 7.2" stroke="#2d2a2a" stroke-width="1.6"/></svg>
<div class="t" style="left:1075.50px;top:1043.28px;font-size:23.6px;line-height:30.68px;color:#1c1a1a;font-weight:400;font-family:'Liberation Sans', sans-serif;-webkit-text-stroke:0.3px #1c1a1a;letter-spacing:-0.315px;">Results</div>
<div class="t" style="left:1212.50px;top:1042.58px;font-size:24.3px;line-height:31.59px;color:#1c1a1a;font-weight:400;font-family:'Liberation Sans', sans-serif;-webkit-text-stroke:0.3px #1c1a1a;letter-spacing:-0.032px;">Compiled code</div>
<div class="a" style="left:1183px;top:1098px;width:221px;height:3px;background:#9b9492;"></div>
<div class="a" style="left:2224px;top:1029px;width:230.4px;height:54.4px;border:1.3px solid #8f8a8a;border-radius:11px;background:#fff;"></div>
<svg class="a" style="left:2234px;top:1042px;" width="34" height="30" viewBox="0 0 34 30" fill="none"><defs><linearGradient id="cg" gradientUnits="userSpaceOnUse" x1="15" y1="0" x2="27" y2="0"><stop offset="0" stop-color="#e8601c"/><stop offset="1" stop-color="#5a2ee6"/></linearGradient></defs><g stroke-width="1.8" fill="none" stroke-linejoin="round" stroke-linecap="round"><path stroke="#e8601c" d="M16.2 9.9L10.2 6.1Q6.6 4.4 5.8 7.6Q5.8 9.2 7.1 11.2Q9.5 15.4 7.1 19.6Q5.8 21.7 5.8 23.3Q6.3 26.3 9.4 25L16.2 21.2"/><path stroke="url(#cg)" d="M16.2 9.9L23.8 5.9Q26.9 4.6 27.3 7.7Q27.3 9.3 26 11.2Q23.6 15.4 26 19.6Q27.3 21.6 27.3 23.4Q26.9 26.3 23.8 25.1L20.1 23"/><path stroke="url(#cg)" d="M14.9 10.7Q11.9 12.8 12.2 16.2Q12.8 19.6 16.2 20.9Q19.9 19.3 20.7 15.8Q21 13.5 19.6 12.1"/></g><path fill="#e8601c" d="M16.4 13.5L17.1 14.8L18.4 15.4L17.1 16.1L16.4 17.4L15.8 16.1L14.5 15.4L15.8 14.8Z"/></svg>
<div class="t" style="left:2278.00px;top:1041.38px;font-size:25.5px;line-height:33.15px;color:#1c1a1a;font-weight:400;font-family:'Liberation Sans', sans-serif;-webkit-text-stroke:0.65px #1c1a1a;letter-spacing:-0.054px;">dbt Copilot</div>
<svg class="a" style="left:2414px;top:1046px;" width="26" height="24" viewBox="0 0 26 24" fill="none"><path d="M6.5 7.7L13.5 15L20.5 7.7" stroke="#2d2a2a" stroke-width="1.7"/></svg>
<svg class="a" style="left:1440px;top:1170px;" width="90" height="60" viewBox="0 0 90 60" fill="none"><g stroke="#6b6565" stroke-width="4" stroke-linecap="butt" stroke-linejoin="miter"><path d="M32.8 14.6L19.9 27.4L32.8 40.2M61.2 14.6L74.1 27.4L61.2 40.2M52.2 9.6L43 44"/></g></svg>
<div class="t" style="left:486.56px;width:2000px;text-align:center;top:1256.29px;font-size:28.5px;line-height:37.05px;color:#4a4545;font-weight:700;font-family:'Liberation Sans', sans-serif;letter-spacing:-0.285px;">There&#x27;s nothing here.</div>
<div class="t" style="left:487.03px;width:2000px;text-align:center;top:1304.18px;font-size:25.4px;line-height:33.02px;color:#6b6666;font-weight:400;font-family:'Liberation Sans', sans-serif;-webkit-text-stroke:0.3px #6b6666;letter-spacing:0.253px;">Press Compile above to preview the SQL dbt will run against your warehouse.</div>
<div class="a" style="left:0px;top:1405px;width:2478px;height:73px;background:linear-gradient(180deg,#fdfdfd 0%,#f7f7f7 45%,#e6e6e6 100%);"></div>
<div class="a" style="left:0px;top:1405px;width:2478px;height:1px;background:#e8e6e6;"></div>
<div class="a" style="left:71px;top:1406px;width:1px;height:72px;background:#e2e0e0;"></div>
<div class="a" style="left:79px;top:1407px;width:1690px;height:80px;border:1px solid rgba(0,0,0,0.035);border-radius:14px;"></div>
<svg class="a" style="left:24px;top:1430px;" width="24" height="22" viewBox="0 0 24 22" fill="none"><path d="M5.5 15.5L11.8 9L18 15.5" stroke="#333" stroke-width="1.8"/></svg>
<div class="t" style="left:101.20px;top:1427.28px;font-size:24.3px;line-height:31.59px;color:#6b6666;font-weight:400;font-family:'Liberation Sans', sans-serif;-webkit-text-stroke:0.3px #6b6666;letter-spacing:0.363px;">dbt build --select &lt;model_name&gt;</div>
<div class="a" style="left:1791px;top:1423px;width:72px;height:36px;background:#5b3df0;border-radius:18px;"></div>
<div class="a" style="left:1830.8px;top:1427.7px;width:25.4px;height:25.4px;border-radius:50%;background:#fff;"></div>
<svg class="a" style="left:1800px;top:1430px;" width="26" height="22" viewBox="0 0 26 22" fill="none"><path d="M5.5 11.5L9.6 15.8L20.5 5.5" stroke="#fff" stroke-width="1.8"/></svg>
<div class="t" style="left:1885.10px;top:1424.29px;font-size:26.3px;line-height:34.19px;color:#4a4545;font-weight:400;font-family:'Liberation Sans', sans-serif;-webkit-text-stroke:0.65px #4a4545;letter-spacing:0.365px;">Defer to staging/production</div>
<svg class="a" style="left:2216px;top:1426px;" width="30" height="27" viewBox="0 0 30 27" fill="none"><g stroke="#6b6666" stroke-width="1.4"><circle cx="14.3" cy="13.2" r="9.3"/><path d="M11.3 10.7Q11.3 7.6 14.3 7.6Q17.3 7.6 17.3 10.4Q17.3 12.4 14.3 13.5V15.6"/></g><circle cx="14.3" cy="18.2" r="1" fill="#6b6666"/></svg>
<div class="a" style="left:2263px;top:1420px;width:127px;height:43px;background:#c4f7c9;border-radius:10px;"></div>
<div class="a" style="left:2274.3px;top:1429.2px;width:20.2px;height:20.2px;border-radius:50%;border:2.1px solid #1c1a1a;"></div>
<div class="t" style="left:2310.50px;top:1427.48px;font-size:23.3px;line-height:30.29px;color:#1c1a1a;font-weight:400;font-family:'Liberation Sans', sans-serif;-webkit-text-stroke:0.8px #1c1a1a;letter-spacing:-0.159px;">Ready</div>
<div class="a" style="left:2404.5px;top:1414.4px;width:57px;height:52px;border:1.3px solid #8f8a8a;border-radius:10px;background:#fff;"></div>
<div class="a" style="left:2420.9px;top:1439.0px;width:5.4px;height:5.4px;border-radius:50%;background:#1c1a1a;"></div>
<div class="a" style="left:2430.3px;top:1439.0px;width:5.4px;height:5.4px;border-radius:50%;background:#1c1a1a;"></div>
<div class="a" style="left:2439.7000000000003px;top:1439.0px;width:5.4px;height:5.4px;border-radius:50%;background:#1c1a1a;"></div>
<svg class="a" style="left:2448px;top:1448px;" width="30" height="30" viewBox="0 0 30 30" fill="none"><path d="M30 0V30H0Q30 30 30 0Z" fill="#000"/></svg>
<div class="a" style="left:2333px;top:141px;width:4px;height:1.1999999999999886px;background:#4a4aff;opacity:0.7;"></div>
<div class="a" style="left:2333px;top:145px;width:6px;height:1.1999999999999886px;background:#3a3a3a;opacity:0.7;"></div>
<div class="a" style="left:2340px;top:145px;width:2px;height:1.1999999999999886px;background:#4a4aff;opacity:0.7;"></div>
<div class="a" style="left:2343px;top:145px;width:1px;height:1.1999999999999886px;background:#4a4aff;opacity:0.7;"></div>
<div class="a" style="left:2337px;top:149px;width:6px;height:1.1999999999999886px;background:#4a4aff;opacity:0.7;"></div>
<div class="a" style="left:2344px;top:149px;width:1px;height:1.1999999999999886px;background:#3a3a3a;opacity:0.7;"></div>
<div class="a" style="left:2346px;top:149px;width:4px;height:1.1999999999999886px;background:#4a4aff;opacity:0.7;"></div>
<div class="a" style="left:2351px;top:149px;width:1px;height:1.1999999999999886px;background:#3f9f3f;opacity:0.7;"></div>
<div class="a" style="left:2352px;top:149px;width:1px;height:1.1999999999999886px;background:#7b3814;opacity:0.7;"></div>
<div class="a" style="left:2354px;top:149px;width:6px;height:1.1999999999999886px;background:#3a3a3a;opacity:0.7;"></div>
<div class="a" style="left:2360px;top:149px;width:1px;height:1.1999999999999886px;background:#4a4aff;opacity:0.7;"></div>
<div class="a" style="left:2361px;top:149px;width:6px;height:1.1999999999999886px;background:#b04040;opacity:0.7;"></div>
<div class="a" style="left:2367px;top:149px;width:1px;height:1.1999999999999886px;background:#3a3a3a;opacity:0.7;"></div>
<div class="a" style="left:2369px;top:149px;width:12px;height:1.1999999999999886px;background:#b04040;opacity:0.7;"></div>
<div class="a" style="left:2381px;top:149px;width:1px;height:1.1999999999999886px;background:#4a4aff;opacity:0.7;"></div>
<div class="a" style="left:2383px;top:149px;width:1px;height:1.1999999999999886px;background:#7b3814;opacity:0.7;"></div>
<div class="a" style="left:2384px;top:149px;width:1px;height:1.1999999999999886px;background:#3f9f3f;opacity:0.7;"></div>
<div class="a" style="left:2333px;top:153px;width:1px;height:1.1999999999999886px;background:#4a4aff;opacity:0.7;"></div>
<div class="a" style="left:2334px;top:153px;width:1px;height:1.1999999999999886px;background:#3a3a3a;opacity:0.7;"></div>
<div class="a" style="left:2333px;top:157px;width:7px;height:1.1999999999999886px;background:#3a3a3a;opacity:0.7;"></div>
<div class="a" style="left:2341px;top:157px;width:2px;height:1.1999999999999886px;background:#4a4aff;opacity:0.7;"></div>
<div class="a" style="left:2344px;top:157px;width:1px;height:1.1999999999999886px;background:#4a4aff;opacity:0.7;"></div>
<div class="a" style="left:2337px;top:161px;width:6px;height:1.1999999999999886px;background:#4a4aff;opacity:0.7;"></div>
<div class="a" style="left:2341px;top:165px;width:10px;height:1.1999999999999886px;background:#3f9f3f;opacity:0.7;"></div>
<div class="a" style="left:2353px;top:165px;width:3px;height:1.1999999999999886px;background:#3f9f3f;opacity:0.7;"></div>
<div class="a" style="left:2341px;top:167px;width:2px;height:1.1999999999999886px;background:#3a3a3a;opacity:0.7;"></div>
<div class="a" style="left:2344px;top:167px;width:2px;height:1.1999999999999886px;background:#4a4aff;opacity:0.7;"></div>
<div class="a" style="left:2347px;top:167px;width:12px;height:1.1999999999999886px;background:#3a3a3a;opacity:0.7;"></div>
<div class="a" style="left:2341px;top:171px;width:10px;height:1.1999999999999886px;background:#3f9f3f;opacity:0.7;"></div>
<div class="a" style="left:2352px;top:171px;width:4px;height:1.1999999999999886px;background:#3f9f3f;opacity:0.7;"></div>
<div class="a" style="left:2341px;top:173px;width:4px;height:1.1999999999999886px;background:#4a4aff;opacity:0.7;"></div>
<div class="a" style="left:2346px;top:173px;width:2px;height:1.1999999999999886px;background:#4a4aff;opacity:0.7;"></div>
<div class="a" style="left:2349px;top:173px;width:14px;height:1.1999999999999886px;background:#3a3a3a;opacity:0.7;"></div>
<div class="a" style="left:2341px;top:177px;width:10px;height:1.1999999999999886px;background:#3f9f3f;opacity:0.7;"></div>
<div class="a" style="left:2352px;top:177px;width:8px;height:1.1999999999999886px;background:#3f9f3f;opacity:0.7;"></div>
<div class="a" style="left:2341px;top:179px;width:9px;height:1.1999999999999886px;background:#3a3a3a;opacity:0.7;"></div>
<div class="a" style="left:2341px;top:183px;width:10px;height:1.1999999999999886px;background:#3f9f3f;opacity:0.7;"></div>
<div class="a" style="left:2352px;top:183px;width:10px;height:1.1999999999999886px;background:#3f9f3f;opacity:0.7;"></div>
<div class="a" style="left:2341px;top:185px;width:1px;height:1.1999999999999886px;background:#3f9f3f;opacity:0.7;"></div>
<div class="a" style="left:2342px;top:185px;width:1px;height:1.1999999999999886px;background:#7b3814;opacity:0.7;"></div>
<div class="a" style="left:2344px;top:185px;width:14px;height:1.1999999999999886px;background:#3a3a3a;opacity:0.7;"></div>
<div class="a" style="left:2358px;top:185px;width:1px;height:1.1999999999999886px;background:#4a4aff;opacity:0.7;"></div>
<div class="a" style="left:2359px;top:185px;width:5px;height:1.1999999999999886px;background:#b04040;opacity:0.7;"></div>
<div class="a" style="left:2364px;top:185px;width:1px;height:1.1999999999999886px;background:#3a3a3a;opacity:0.7;"></div>
<div class="a" style="left:2366px;top:185px;width:11px;height:1.1999999999999886px;background:#b04040;opacity:0.7;"></div>
<div class="a" style="left:2377px;top:185px;width:1px;height:1.1999999999999886px;background:#4a4aff;opacity:0.7;"></div>
<div class="a" style="left:2379px;top:185px;width:1px;height:1.1999999999999886px;background:#7b3814;opacity:0.7;"></div>
<div class="a" style="left:2380px;top:185px;width:1px;height:1.1999999999999886px;background:#3f9f3f;opacity:0.7;"></div>
<div class="a" style="left:2382px;top:185px;width:2px;height:1.1999999999999886px;background:#4a4aff;opacity:0.7;"></div>
<div class="a" style="left:2385px;top:185px;width:11px;height:1.1999999999999886px;background:#3a3a3a;opacity:0.7;"></div>
<div class="a" style="left:2337px;top:189px;width:4px;height:1.1999999999999886px;background:#4a4aff;opacity:0.7;"></div>
<div class="a" style="left:2342px;top:189px;width:6px;height:1.1999999999999886px;background:#3a3a3a;opacity:0.7;"></div>
<div class="a" style="left:2333px;top:193px;width:1px;height:1.1999999999999886px;background:#4a4aff;opacity:0.7;"></div>
<div class="a" style="left:2333px;top:197px;width:6px;height:1.1999999999999886px;background:#4a4aff;opacity:0.7;"></div>
<div class="a" style="left:2340px;top:197px;width:1px;height:1.1999999999999886px;background:#3a3a3a;opacity:0.7;"></div>
<div class="a" style="left:2342px;top:197px;width:4px;height:1.1999999999999886px;background:#4a4aff;opacity:0.7;"></div>
<div class="a" style="left:2347px;top:197px;width:7px;height:1.1999999999999886px;background:#3a3a3a;opacity:0.7;"></div>
</body></html>
